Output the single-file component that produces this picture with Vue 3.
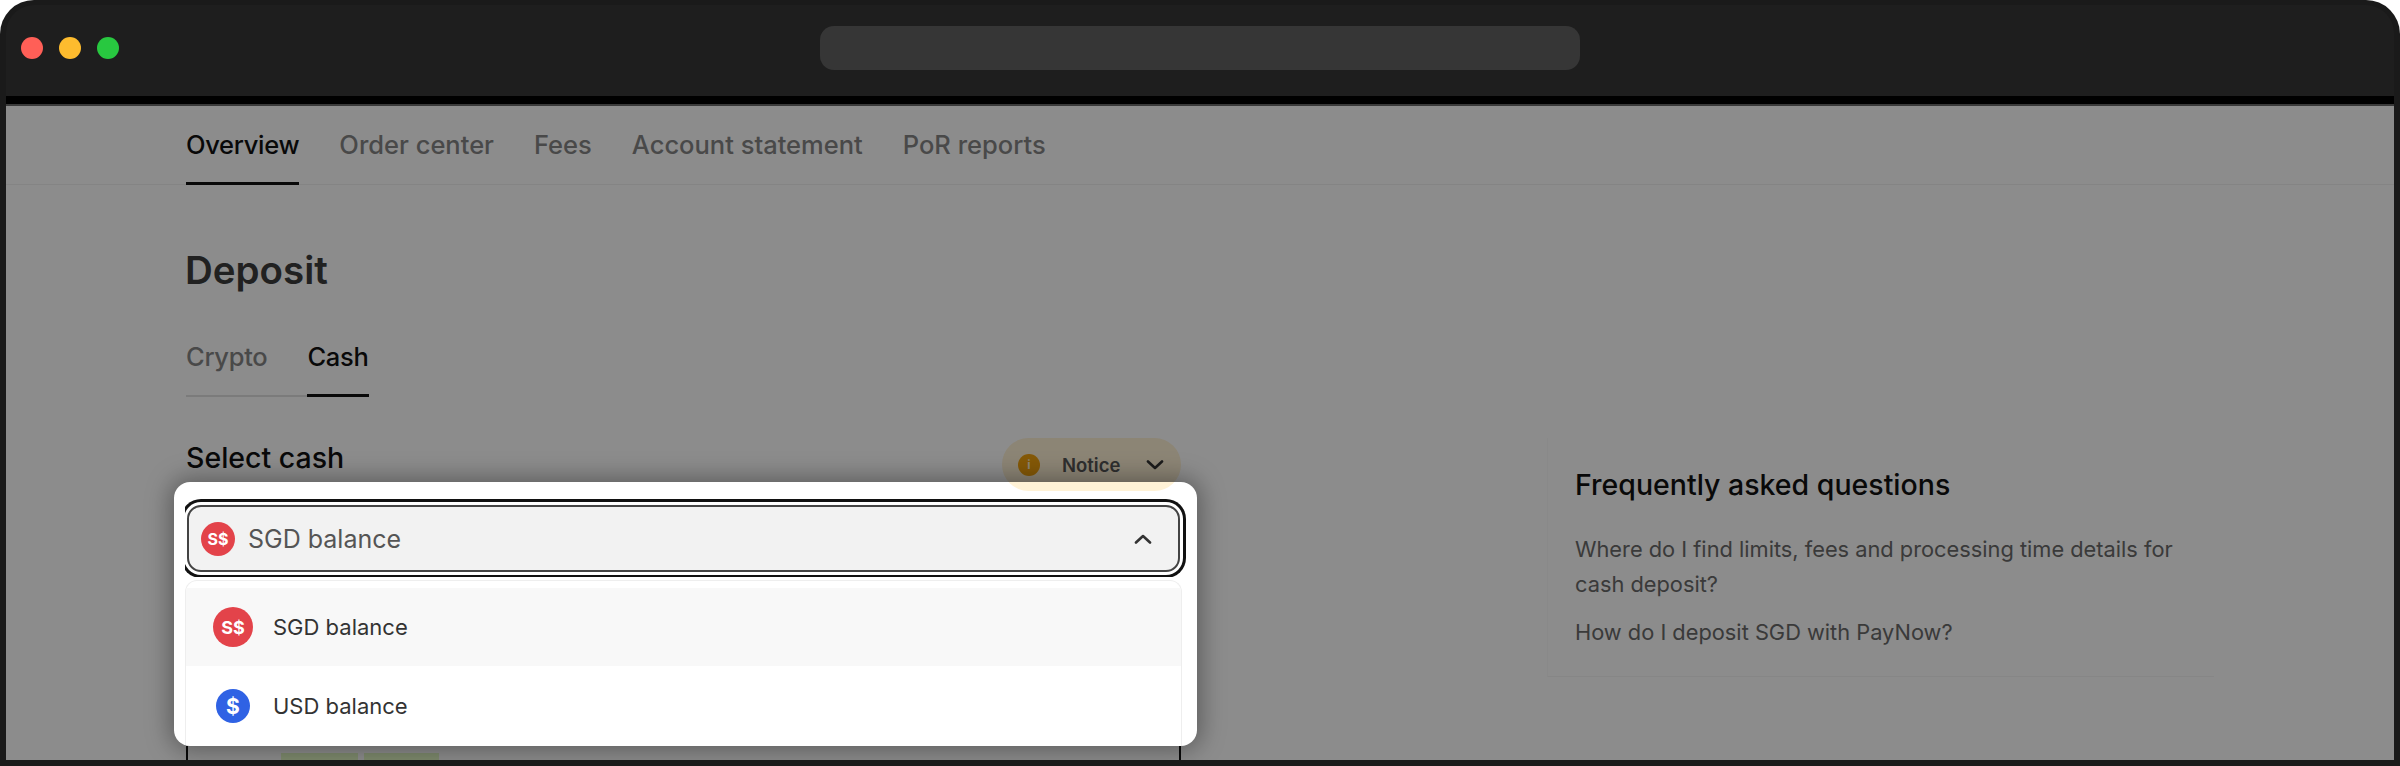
<script setup>
const navItems = ['Overview', 'Order center', 'Fees', 'Account statement', 'PoR reports']
const faqs = [
  'Where do I find limits, fees and processing time details for cash deposit?',
  'How do I deposit SGD with PayNow?',
]
</script>

<template>
  <div class="frame">
    <header class="bar">
      <div class="dots">
        <span class="dot red"></span>
        <span class="dot yellow"></span>
        <span class="dot green"></span>
      </div>
      <div class="url"></div>
    </header>
    <div class="band"></div>

    <main class="page">
      <nav class="nav">
        <a v-for="(item, i) in navItems" :key="item" class="nav-item" :class="{ active: i === 0 }">{{ item }}</a>
      </nav>

      <div class="body">
        <h1 class="title">Deposit</h1>
        <div class="tabs">
          <span class="tab">Crypto</span>
          <span class="tab active">Cash</span>
        </div>

        <div class="columns">
          <section class="form">
            <div class="label-row">
              <span class="label">Select cash</span>
              <button class="notice">
                <span class="notice-ico">i</span>
                <span class="notice-text">Notice</span>
                <svg class="chev" viewBox="0 0 18 10" aria-hidden="true"><path d="M2 1.5 9 8l7-6.5" /></svg>
              </button>
            </div>

            <div class="select-wrap">
              <div class="select-clip">
                <div class="select">
                  <span class="coin sgd small">S$</span>
                  <span class="select-text">SGD balance</span>
                  <svg class="chev up" viewBox="0 0 18 10" aria-hidden="true"><path d="M2 8.5 9 2l7 6.5" /></svg>
                </div>
              </div>
              <div class="menu">
                <div class="option hover">
                  <span class="coin sgd big">S$</span>
                  <span>SGD balance</span>
                </div>
                <div class="option">
                  <span class="coin usd">$</span>
                  <span>USD balance</span>
                </div>
              </div>
            </div>

            <div class="card">
              <span class="tag">Instant</span>
              <span class="tag">No fee</span>
            </div>
          </section>

          <aside class="faq">
            <h2 class="faq-title">Frequently asked questions</h2>
            <p v-for="q in faqs" :key="q" class="faq-q">{{ q }}</p>
          </aside>
        </div>
      </div>

      <!-- tour spotlight: transparent hole, everything around it is dimmed -->
      <div class="spot"></div>
    </main>
  </div>
</template>

<style scoped>
.frame {
  width: 2400px;
  height: 766px;
  box-sizing: border-box;
  background: #1a1a1a;
  border-radius: 34px 34px 0 0;
  padding: 5px 6px 6px;
  display: flex;
  flex-direction: column;
  overflow: hidden;
  font-family: Inter, "Liberation Sans", sans-serif;
}
.bar {
  height: 91px;
  flex: none;
  background: #1e1e1e;
  border-radius: 28px 28px 0 0;
  display: grid;
  grid-template-columns: 1fr 760px 1fr;
  align-items: center;
  padding-bottom: 5px;
  box-sizing: border-box;
}
.dots {
  display: flex;
  gap: 16px;
  padding-left: 15px;
}
.dot { width: 22px; height: 22px; border-radius: 50%; }
.red { background: #ff5f57; }
.yellow { background: #febc2e; }
.green { background: #28c840; }
.url {
  height: 44px;
  background: #363636;
  border-radius: 14px;
}
.band { height: 8px; flex: none; background: #000; border-bottom: 2px solid #3a3a3a; }

.page {
  flex: 1;
  position: relative;
  overflow: hidden;
  background: #fff;
}
.nav {
  height: 79px;
  box-sizing: border-box;
  padding-left: 180px;
  display: flex;
  gap: 40px;
  border-bottom: 1px solid #f0f0f0;
}
.nav-item {
  height: 79px;
  box-sizing: border-box;
  padding-top: 24px;
  font-size: 25.5px;
  line-height: 30px;
  font-weight: 500;
  color: #868686;
}
.nav-item.active { color: #111; border-bottom: 3px solid #111; letter-spacing: -.3px; }

.body { padding-left: 180px; }
.title {
  margin: 0 0 0 -1px;
  padding-top: 62px;
  font-size: 38.5px;
  line-height: 46px;
  font-weight: 600;
  color: #3c3c3c;
}
.tabs {
  display: flex;
  width: fit-content;
  margin-top: 49px;
  gap: 40px;
  box-shadow: inset 0 -2px 0 #e0e0e0;
}
.tab {
  font-size: 25.5px;
  line-height: 30px;
  font-weight: 500;
  padding-bottom: 25px;
  letter-spacing: -.3px;
  color: #868686;
}
.tab.active { color: #111; box-shadow: inset 0 -3px 0 #111; }

.columns { display: flex; margin: 41px 0 0 -1px; }
.form { width: 995px; flex: none; }
.label-row {
  height: 53px;
  display: flex;
  justify-content: space-between;
  align-items: flex-start;
}
.label { margin-left: 1px; font-size: 28.5px; line-height: 40px; font-weight: 500; color: #111; }
.notice {
  height: 53px;
  width: 179px;
  box-sizing: border-box;
  border: 0;
  border-radius: 27px;
  background: #fff2d6;
  display: flex;
  align-items: center;
  padding: 0 17px 0 16px;
  font: inherit;
  margin-right: -1px;
  position: relative;
}
.notice-ico {
  width: 22px;
  height: 22px;
  border-radius: 50%;
  background: #f2a20c;
  color: #fff2d6;
  font-size: 12px;
  font-weight: 700;
  line-height: 22px;
  text-align: center;
}
.notice-text { margin-left: 22px; font-size: 18.5px; font-weight: 600; color: #555; }
.chev { width: 18px; height: 10px; fill: none; stroke: #333; stroke-width: 2.6; stroke-linecap: round; stroke-linejoin: round; margin-left: auto; }

.select-wrap { position: relative; margin-top: 7px; width: 1002px; }
.select-clip { height: 79px; overflow: hidden; padding: 7px 7px 0 2px; box-sizing: border-box; }
.select {
  height: 67px;
  box-sizing: border-box;
  border: 2px solid #444;
  border-radius: 14px;
  background: #f2f2f2;
  box-shadow: 0 0 0 3px #fff, 0 0 0 6px #111;
  display: flex;
  align-items: center;
  padding: 0 26px 0 12px;
}
.coin {
  border-radius: 50%;
  color: #fff;
  font-weight: 700;
  display: flex;
  align-items: center;
  justify-content: center;
  flex: none;
}
.coin.sgd { background: #e3434a; }
.coin.small { width: 34px; height: 34px; font-size: 16px; }
.coin.big { width: 40px; height: 40px; font-size: 18px; }
.coin.usd { width: 34px; height: 34px; font-size: 21px; background: #2f62e4; margin: 0 3px; }
.select-text { margin-left: 13px; font-size: 25px; color: #555; }
.select .chev { stroke: #333; }

.menu {
  position: absolute;
  top: 82px;
  left: 0;
  width: 997px;
  height: 166px;
  box-sizing: border-box;
  padding-top: 7px;
  background: #fff;
  border: 1px solid #eee;
  border-bottom: 0;
  border-radius: 12px 12px 0 0;
  overflow: hidden;
}
.option {
  height: 80px;
  display: flex;
  align-items: center;
  gap: 20px;
  padding-left: 27px;
  font-size: 22px;
  color: #333;
}
.option.hover { height: 78px; background: #f8f8f8; }

.card {
  box-sizing: border-box;
  margin-top: 8px;
  margin-left: 1px;
  width: 995px;
  height: 240px;
  border: 2px solid #111;
  border-radius: 14px;
  padding: 166px 0 0 93px;
  display: flex;
  gap: 6px;
  align-items: flex-start;
}
.tag {
  width: 77px;
  height: 30px;
  background: #e4fbc6;
  color: #3c6b12;
  font-size: 17px;
  line-height: 30px;
  text-align: center;
}
.tag + .tag { width: 75px; }

.faq {
  margin-left: 367px;
  width: 667px;
  box-sizing: border-box;
  padding: 30px 0 26px 27px;
  border-bottom: 1px solid #f4f4f4;
  border-left: 1px solid #fafafa;
  align-self: flex-start;
}
.faq-title { margin: 0 0 30px; font-size: 28.5px; line-height: 34px; font-weight: 500; color: #111; }
.faq-q { margin: 0 0 13px; font-size: 21.8px; line-height: 35px; color: #6a6a6a; width: 610px; }
.faq-q:last-child { margin-bottom: 0; }

.spot {
  position: absolute;
  left: 168px;
  top: 376px;
  width: 1023px;
  height: 264px;
  border-radius: 16px;
  box-shadow: 0 0 0 2400px rgba(0, 0, 0, .45), 0 0 24px 4px rgba(0, 0, 0, .35);
}
</style>

<style>
body { background: #fff; }
</style>
